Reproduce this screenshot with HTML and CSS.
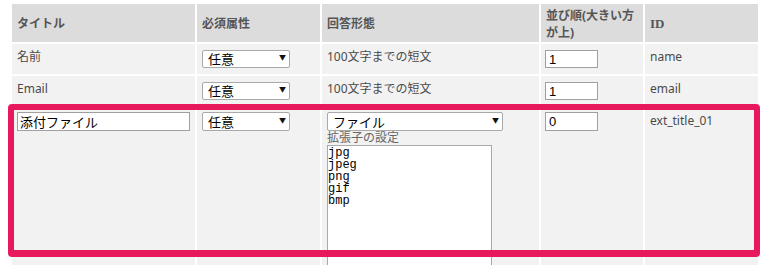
FILE: index.html
```html
<!DOCTYPE html>
<html lang="ja">
<head>
    <meta charset="UTF-8">
    <meta name="viewport" content="width=device-width, initial-scale=1.0">
    <title>項目設定</title>
    <link rel="stylesheet" href="styles.css">
</head>
<body>
    <div class="wrap">
        <table class="items">
            <colgroup>
                <col class="c-title">
                <col class="c-req">
                <col class="c-type">
                <col class="c-order">
                <col class="c-id">
            </colgroup>
            <thead>
                <tr>
                    <th>タイトル</th>
                    <th>必須属性</th>
                    <th>回答形態</th>
                    <th class="th-order">並び順(大きい方<br>が上)</th>
                    <th><span class="latin">ID</span></th>
                </tr>
            </thead>
            <tbody>
                <tr class="row">
                    <td>名前</td>
                    <td><span class="sel sel-req"><select><option>任意</option><option>必須</option></select></span></td>
                    <td>100文字までの短文</td>
                    <td><input class="num num-top" type="text" value="1"></td>
                    <td>name</td>
                </tr>
                <tr class="row">
                    <td>Email</td>
                    <td><span class="sel sel-req"><select><option>任意</option><option>必須</option></select></span></td>
                    <td>100文字までの短文</td>
                    <td><input class="num num-top" type="text" value="1"></td>
                    <td>email</td>
                </tr>
                <tr class="row row-ext">
                    <td><input class="title-input" type="text" value="添付ファイル"></td>
                    <td><span class="sel sel-ext"><select><option>任意</option><option>必須</option></select></span></td>
                    <td>
                        <span class="sel sel-file"><select><option>ファイル</option><option>100文字までの短文</option></select></span>
                        <div class="ext-label">拡張子の設定</div>
                        <textarea class="ext-list">jpg
jpeg
png
gif
bmp</textarea>
                    </td>
                    <td><input class="num" type="text" value="0"></td>
                    <td>ext_title_01</td>
                </tr>
            </tbody>
        </table>
        <div class="highlight"></div>
    </div>
</body>
</html>
```

FILE: styles.css
```css
body {
    margin: 0;
    font-family: "Noto Sans", "Noto Sans CJK JP", sans-serif;
    font-size: 12px;
    color: #4a4a4a;
    background: #fff;
}
.wrap {
    position: relative;
    height: 265px;
    overflow: hidden;
}
.items {
    margin: 2px 0 0 10px;
    width: 750px;
    table-layout: fixed;
    border-spacing: 2px;
}
.c-title { width: 183px; }
.c-req { width: 123px; }
.c-type { width: 217px; }
.c-order { width: 102px; }
.c-id { width: 113px; }

.items th {
    height: 38px;
    box-sizing: border-box;
    padding: 0 5px;
    background: #dcdcdc;
    color: #555;
    font-weight: bold;
    text-align: left;
    vertical-align: middle;
    line-height: 15px;
}
.items .th-order {
    padding: 2px 5px 0;
    line-height: 17px;
}
.latin {
    font-family: "Liberation Serif", serif;
    font-size: 13px;
}
.items td {
    background: #f2f2f2;
    padding: 4px 5px;
    vertical-align: top;
    line-height: 17px;
}
.row td {
    height: 30px;
    box-sizing: border-box;
}
.row-ext td {
    height: 175px;
}

.sel {
    position: relative;
    display: block;
}
.sel select {
    appearance: none;
    -webkit-appearance: none;
    display: block;
    box-sizing: border-box;
    height: 18px;
    padding: 0 0 0 5px;
    border: 1px solid #a9a9a9;
    border-radius: 2px;
    background: #fff;
    color: #000;
    font-family: "Noto Sans CJK JP", sans-serif;
    font-size: 13px;
    line-height: 16px;
}
.sel::after {
    content: "▼";
    position: absolute;
    top: 4px;
    font-size: 7px;
    line-height: 8px;
    color: #111;
    pointer-events: none;
}
.sel-req {
    margin-top: 2px;
}
.sel-req select,
.sel-ext select {
    width: 88px;
}
.sel-req::after,
.sel-ext::after {
    left: 77px;
}
.sel-ext select,
.sel-file select {
    height: 19px;
}
.sel-ext::after,
.sel-file::after {
    top: 5px;
}
.sel-file select {
    width: 176px;
}
.sel-file::after {
    left: 165px;
}

.num {
    display: block;
    box-sizing: border-box;
    width: 53px;
    height: 19px;
    margin: 0 0 0 -1px;
    padding: 0 3px;
    border: 1px solid #a0a0a0;
    background: #fff;
    color: #000;
    font-family: "Liberation Sans", sans-serif;
    font-size: 13px;
}
.num-top {
    margin-top: 2px;
    height: 18px;
}
.title-input {
    display: block;
    box-sizing: border-box;
    width: 173px;
    height: 19px;
    padding: 0 2px;
    border: 1px solid #a0a0a0;
    background: #fff;
    color: #000;
    font-family: "Noto Sans CJK JP", sans-serif;
    font-size: 13px;
}
.ext-label {
    color: #666;
    font-size: 12px;
    line-height: 14px;
}
.ext-list {
    display: block;
    box-sizing: border-box;
    width: 165px;
    height: 140px;
    margin: 0;
    padding: 1px 0;
    border: 1px solid #a9a9a9;
    background: #fff;
    color: #000;
    font-family: "Liberation Mono", monospace;
    font-size: 12px;
    line-height: 12px;
    resize: none;
}

.highlight {
    position: absolute;
    left: 8px;
    top: 104px;
    width: 752px;
    height: 153px;
    box-sizing: border-box;
    border: 6px solid #e8185d;
    border-bottom-width: 7px;
    border-radius: 4px;
    pointer-events: none;
}
```
